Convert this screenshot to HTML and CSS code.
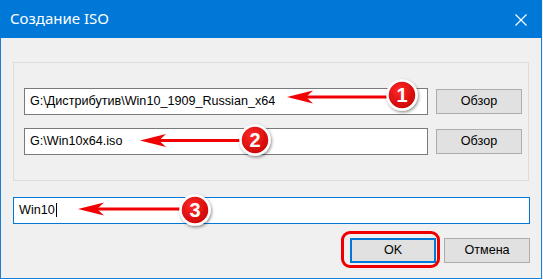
FILE: index.html
```html
<!DOCTYPE html>
<html lang="ru">
<head>
<meta charset="utf-8">
<title>Создание ISO</title>
<link rel="stylesheet" href="styles.css">
</head>
<body>
<div class="window">
  <div class="titlebar">
    <span class="title">Создание ISO</span>
    <span class="close">
      <svg width="12" height="12" viewBox="0 0 12 12"><path d="M0.5 0.5 L11.5 11.5 M11.5 0.5 L0.5 11.5" stroke="#fff" stroke-width="1.2" fill="none"/></svg>
    </span>
  </div>
  <div class="content">
    <div class="group">
      <div class="row">
        <div class="field">G:\Дистрибутив\Win10_1909_Russian_x64</div>
        <div class="btn">Обзор</div>
      </div>
      <div class="row">
        <div class="field">G:\Win10x64.iso</div>
        <div class="btn">Обзор</div>
      </div>
    </div>
    <div class="field field-wide">Win10<span class="caret"></span></div>
    <div class="actions">
      <div class="btn btn-default">OK</div>
      <div class="btn">Отмена</div>
    </div>
  </div>
  <div class="ok-ring"></div>
  <svg class="marks" width="543" height="279" viewBox="0 0 543 279">
    <defs>
      <radialGradient id="rg" cx="0.4" cy="0.35" r="0.7">
        <stop offset="0" stop-color="#ff2a2a"/>
        <stop offset="1" stop-color="#c80000"/>
      </radialGradient>
      <filter id="sh" x="-50%" y="-50%" width="200%" height="200%">
        <feDropShadow dx="1" dy="1.5" stdDeviation="1.5" flood-color="#000" flood-opacity="0.45"/>
      </filter>
    </defs>
    <g fill="#f00000" stroke="none">
      <rect x="300" y="95.5" width="90" height="3"/>
      <polygon points="287,97 313,90.5 306,97 313,103.5"/>
      <rect x="153" y="139" width="90" height="3"/>
      <polygon points="140,140.5 166,134 159,140.5 166,147"/>
      <rect x="91" y="207.5" width="92" height="3"/>
      <polygon points="78,209 104,202.5 97,209 104,215.5"/>
    </g>
    <g filter="url(#sh)">
      <circle cx="402" cy="95" r="14.5" fill="url(#rg)" stroke="#fff" stroke-width="2.5"/>
      <circle cx="255" cy="140" r="14.5" fill="url(#rg)" stroke="#fff" stroke-width="2.5"/>
      <circle cx="195" cy="210" r="14.5" fill="url(#rg)" stroke="#fff" stroke-width="2.5"/>
    </g>
    <g class="num" fill="#fff" text-anchor="middle">
      <text x="402" y="102">1</text>
      <text x="255" y="147">2</text>
      <text x="195" y="217">3</text>
    </g>
  </svg>
</div>
</body>
</html>
```
FILE: styles.css
```css
* { box-sizing: border-box; }
html, body { margin: 0; padding: 0; }
body {
  width: 543px;
  height: 279px;
  overflow: hidden;
  background: #f0f0f0;
  font-family: "Liberation Sans", Arial, sans-serif;
}
.window {
  position: relative;
  width: 542px;
  height: 279px;
  background: #f0f0f0;
  border: 1px solid #1a80d6;
  border-top: none;
  display: flex;
  flex-direction: column;
}
.titlebar {
  height: 38px;
  background: #0078d7;
  color: #fff;
  display: flex;
  align-items: center;
  justify-content: space-between;
  padding: 0 15px 0 10px;
  margin: 0 -1px;
}
.title {
  font-family: "Noto Sans", "Liberation Sans", sans-serif;
  font-size: 15px;
  line-height: 1;
  padding-bottom: 2px;
}
.close { display: flex; padding-top: 1px; }
.content {
  padding: 24px 12px 0 12px;
  display: flex;
  flex-direction: column;
}
.group {
  width: 516px;
  height: 119px;
  border: 1px solid #dcdcdc;
  padding: 25px 6px 0 10px;
  display: flex;
  flex-direction: column;
  gap: 13px;
}
.row {
  display: flex;
  align-items: center;
  gap: 8px;
}
.field {
  width: 404px;
  height: 27px;
  background: #fff;
  border: 1px solid #7a7a7a;
  font-size: 12.6px;
  color: #000;
  display: flex;
  align-items: center;
  padding: 0 0 1px 5px;
  white-space: nowrap;
}
.field-wide {
  width: 517px;
  margin-top: 16px;
  border-color: #0078d7;
}
.caret {
  display: inline-block;
  width: 1px;
  height: 14px;
  background: #000;
  margin-left: 1px;
}
.btn {
  width: 86px;
  height: 25px;
  background: #e1e1e1;
  border: 1px solid #adadad;
  font-size: 12.6px;
  color: #000;
  display: flex;
  align-items: center;
  justify-content: center;
  padding-bottom: 1px;
}
.actions {
  display: flex;
  justify-content: flex-end;
  gap: 8px;
  margin-top: 14px;
  width: 517px;
}
.btn-default {
  border: 2px solid #0078d7;
}
.ok-ring {
  position: absolute;
  left: 340px;
  top: 231px;
  width: 99px;
  height: 37px;
  border: 3px solid #ee0000;
  border-radius: 9px;
}
.marks {
  position: absolute;
  left: -1px;
  top: 0;
  pointer-events: none;
}
.num text {
  font-family: "Liberation Sans", Arial, sans-serif;
  font-weight: bold;
  font-size: 20px;
}
```
